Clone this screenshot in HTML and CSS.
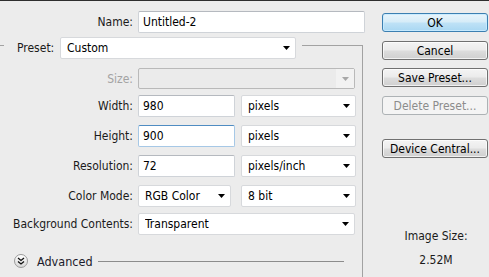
FILE: index.html
```html
<!DOCTYPE html>
<html>
<head>
<meta charset="utf-8">
<link rel="stylesheet" href="styles.css">
</head>
<body>
<div class="dialog">
  <div class="main">
    <div class="row name-row">
      <label class="lbl">Name:</label>
      <input class="field name" value="Untitled-2">
    </div>
    <div class="group">
      <div class="legend">
        <span class="legend-lbl">Preset:</span>
        <div class="select preset"><span class="val">Custom</span><svg class="arrow" width="7" height="4" viewBox="0 0 7 4"><polygon points="0,0 7,0 3.5,4" /></svg></div>
      </div>
      <div class="row r-size">
        <span class="lbl off">Size:</span>
        <div class="select wide disabled"><span class="val"></span><span class="abox"><svg class="arrow" width="7" height="4" viewBox="0 0 7 4"><polygon points="0,0 7,0 3.5,4" /></svg></span></div>
      </div>
      <div class="row r-width">
        <span class="lbl">Width:</span>
        <input class="field num" value="980">
        <div class="select unit"><span class="val">pixels</span><svg class="arrow" width="7" height="4" viewBox="0 0 7 4"><polygon points="0,0 7,0 3.5,4" /></svg></div>
      </div>
      <div class="row r-next">
        <span class="lbl">Height:</span>
        <input class="field num focus" value="900">
        <div class="select unit"><span class="val">pixels</span><svg class="arrow" width="7" height="4" viewBox="0 0 7 4"><polygon points="0,0 7,0 3.5,4" /></svg></div>
      </div>
      <div class="row r-next">
        <span class="lbl">Resolution:</span>
        <input class="field num" value="72">
        <div class="select unit"><span class="val">pixels/inch</span><svg class="arrow" width="7" height="4" viewBox="0 0 7 4"><polygon points="0,0 7,0 3.5,4" /></svg></div>
      </div>
      <div class="row r-next">
        <span class="lbl">Color Mode:</span>
        <div class="select mode"><span class="val">RGB Color</span><svg class="arrow" width="7" height="4" viewBox="0 0 7 4"><polygon points="0,0 7,0 3.5,4" /></svg></div>
        <div class="select unit"><span class="val">8 bit</span><svg class="arrow" width="7" height="4" viewBox="0 0 7 4"><polygon points="0,0 7,0 3.5,4" /></svg></div>
      </div>
      <div class="row r-bg">
        <span class="lbl">Background Contents:</span>
        <div class="select wide"><span class="val">Transparent</span><svg class="arrow" width="7" height="4" viewBox="0 0 7 4"><polygon points="0,0 7,0 3.5,4" /></svg></div>
      </div>
      <div class="advanced">
        <span class="adv-icon"><svg width="8" height="8" viewBox="0 0 8 8"><polyline points="1,1 4,3.5 7,1" /><polyline points="1,4.5 4,7 7,4.5" /></svg></span>
        <span class="adv-text">Advanced</span>
        <span class="adv-line"></span>
      </div>
    </div>
  </div>
  <div class="side">
    <button class="btn default">OK</button>
    <button class="btn b2">Cancel</button>
    <button class="btn b3">Save Preset...</button>
    <button class="btn b4" disabled>Delete Preset...</button>
    <button class="btn b5">Device Central...</button>
    <div class="info">
      <div class="info-lbl">Image Size:</div>
      <div class="info-val">2.52M</div>
    </div>
  </div>
</div>
</body>
</html>
```

FILE: styles.css
```css
* { box-sizing: border-box; }
html, body { margin: 0; padding: 0; }
body {
  width: 489px;
  height: 277px;
  overflow: hidden;
  background: #ececec;
  border-top: 1px solid #2e2e2e;
  font-family: "DejaVu Sans Condensed", "DejaVu Sans", sans-serif;
  font-size: 12px;
  color: #1a1a1a;
}
.dialog { display: flex; align-items: flex-start; height: 276px; overflow: hidden; }
.main { width: 363px; flex: none; height: 276px; }
.row { display: flex; align-items: center; height: 22px; }
.lbl {
  width: 138px;
  flex: none;
  text-align: right;
  padding-right: 5px;
  white-space: nowrap;
}
.lbl.off { color: #a3a3a3; }
.name-row { margin-top: 10px; }
.field {
  height: 22px;
  border: 1px solid #cfd3d8;
  border-top-color: #b5b9bf;
  border-radius: 2px;
  background: #fff;
  font: inherit;
  color: #000;
  padding: 0 4px;
  outline: none;
  flex: none;
}
.field.name { width: 227px; }
.field.num { width: 97px; }
.field.focus { border-color: #a6c8e6; border-top-color: #4f8cc2; }
.group {
  margin-top: 12px;
  border-top: 1px solid #a2a2a2;
  border-right: 1px solid #a2a2a2;
  height: 232px;
}
.legend {
  margin-top: -9px;
  margin-left: 4px;
  width: 298px;
  padding: 0 6px 0 13px;
  background: #ececec;
  display: flex;
  align-items: center;
  justify-content: space-between;
  height: 22px;
}
.select {
  height: 22px;
  background: #fff;
  border: 1px solid #d7d9dc;
  border-radius: 2px;
  display: flex;
  align-items: center;
  padding-left: 6px;
  color: #000;
  flex: none;
}
.select .val { flex: 1; white-space: nowrap; overflow: hidden; }
.select .arrow { flex: none; margin-right: 5px; fill: #000; }
.select.preset { width: 236px; }
.select.wide { width: 217px; }
.select.unit { width: 115px; margin-left: 6px; padding-left: 6px; }
.select.mode { width: 93px; margin-right: 4px; }
.select.disabled {
  height: 21px;
  background: #ebebeb;
  border-color: #b9b9b9;
  padding-left: 0;
}
.select.disabled .abox {
  width: 18px;
  height: 100%;
  background: #f2f2f2;
  display: flex;
  align-items: center;
  justify-content: center;
}
.select.disabled .arrow { fill: #a8a8a8; margin-right: 0; }
.r-size { margin-top: 9px; height: 21px; }
.r-width { margin-top: 6px; }
.r-next { margin-top: 8px; }
.r-bg { margin-top: 6px; }
.advanced {
  margin-top: 18px;
  display: flex;
  align-items: center;
  height: 16px;
  padding-left: 14px;
}
.adv-icon {
  width: 14px;
  height: 14px;
  border-radius: 50%;
  border: 1px solid #9a9a9a;
  background: linear-gradient(#ffffff, #d8d8d8);
  display: flex;
  align-items: center;
  justify-content: center;
  flex: none;
}
.adv-icon svg polyline { fill: none; stroke: #111; stroke-width: 1.3; }
.adv-text { margin-left: 9px; font-size: 12.5px; color: #1a1a2a; }
.adv-line {
  flex: 1;
  height: 1px;
  background: #8c8c8c;
  margin-left: 5px;
  margin-right: 18px;
}
.side {
  margin-left: 19px;
  width: 106px;
  display: flex;
  flex-direction: column;
}
.btn {
  height: 19px;
  width: 106px;
  border: 1px solid #707070;
  border-radius: 3px;
  background: linear-gradient(#f4f4f4 0%, #ebebeb 48%, #dddddd 52%, #cfcfcf 100%);
  box-shadow: inset 0 0 0 1px rgba(255,255,255,0.7);
  font: inherit;
  font-size: 12px;
  color: #000;
  padding: 0;
  line-height: 16px;
}
.btn.default {
  margin-top: 12px;
  border-color: #3c7fb1;
  background: linear-gradient(#e8f4fb 0%, #d6ecf8 48%, #bfe2f6 52%, #a9d7f2 100%);
  box-shadow: inset 0 0 0 1px rgba(200,235,255,0.9);
}
.b2 { margin-top: 9px; }
.b3 { margin-top: 8px; }
.b4 {
  margin-top: 9px;
  border-color: #adb2b5;
  background: #f4f4f4;
  color: #8c8c8c;
  box-shadow: none;
}
.b5 { margin-top: 24px; }
.info { text-align: center; padding-left: 2px; }
.info-lbl { margin-top: 71px; line-height: 14px; }
.info-val { margin-top: 10px; line-height: 14px; }
```
